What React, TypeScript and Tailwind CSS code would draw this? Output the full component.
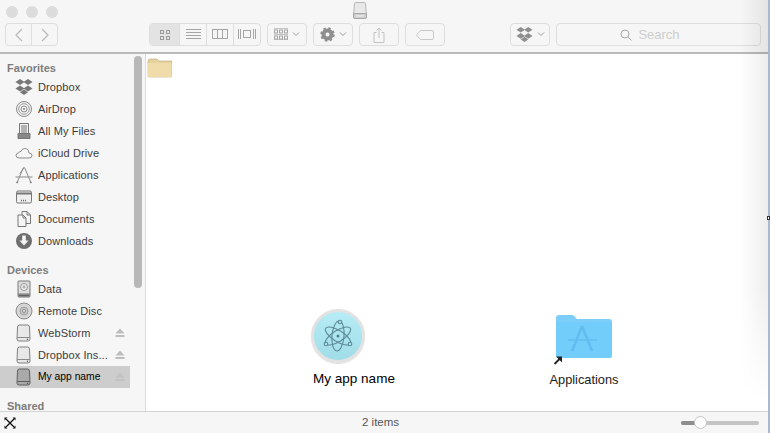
import { ReactNode } from 'react';

const font = { sans: 'font-["Liberation_Sans",Arial,sans-serif]' };

function Ico({ children, w = 20, h = 20 }: { children: ReactNode; w?: number; h?: number }) {
  return (
    <svg width={w} height={h} viewBox={`0 0 ${w} ${h}`} fill="none" stroke="#9a9a9a" strokeWidth="1">
      {children}
    </svg>
  );
}

const DropboxGlyph = ({ fill = '#777' }: { fill?: string }) => (
  <g fill={fill} stroke="none">
    <path d="M5 1 L9.500 4 L5 7 L0.500 4Z" />
    <path d="M13 1 L17.500 4 L13 7 L8.500 4Z" />
    <path d="M5 7.500 L9.500 10.500 L5 13.500 L0.500 10.500Z" />
    <path d="M13 7.500 L17.500 10.500 L13 13.500 L8.500 10.500Z" />
    <path d="M9 11.500 L13 14.200 L9 17 L5 14.200Z" />
  </g>
);

const Drive = ({ dark = false }: { dark?: boolean }) => (
  <Ico w={18} h={18}>
    <path
      d="M2.500 3 Q2.500 1 4.500 1 H12.500 Q14.500 1 14.500 3 L15 15 Q15 17 13 17 H4 Q2 17 2 15Z"
      fill={dark ? '#a9a9a9' : '#e8e8e8'}
      stroke={dark ? '#5f5f5f' : '#808080'}
    />
    <path d="M2.200 13.500 H14.800" stroke={dark ? '#5f5f5f' : '#8a8a8a'} />
    <circle cx="12.500" cy="15.200" r="0.700" fill="#555" stroke="none" />
  </Ico>
);

const sideIcons: Record<string, ReactNode> = {
  Dropbox: (
    <Ico w={18} h={18}>
      <DropboxGlyph />
    </Ico>
  ),
  AirDrop: (
    <Ico w={18} h={18}>
      <circle cx="9" cy="9" r="7.500" stroke="#8a8a8a" />
      <circle cx="9" cy="9" r="5.300" stroke="#9a9a9a" />
      <circle cx="9" cy="9" r="3" stroke="#8a8a8a" />
      <circle cx="9" cy="9" r="1" fill="#777" stroke="none" />
    </Ico>
  ),
  'All My Files': (
    <Ico w={18} h={18}>
      <path d="M4.500 1.500 H13.500 V12 H4.500Z" fill="#f2f2f2" stroke="#777" />
      <path d="M6 4 H12 M6 6 H12 M6 8 H12 M6 10 H12" stroke="#777" />
      <path d="M3 11.500 H15 V16.500 H3Z" fill="#888" stroke="#777" />
    </Ico>
  ),
  'iCloud Drive': (
    <Ico w={18} h={18}>
      <path
        d="M4.500 14 H14 Q17 14 17 11.500 Q17 9.200 14 9 Q13.500 4.500 9.800 4.500 Q7 4.500 6 7.500 Q4.500 7 3.800 8.800 Q1 9.300 1 11.500 Q1 14 4.500 14Z"
        stroke="#8a8a8a"
      />
    </Ico>
  ),
  Applications: (
    <Ico w={18} h={18}>
      <path d="M9.500 1.500 L15.500 15.500 M8.500 1.500 L2.500 15.500 M0.500 11 H17.500 M5 7.500 L9 1.500" stroke="#8a8a8a" />
      <path d="M3 15.500 L1.500 17 M15 15.500 L16.500 17" stroke="#777" strokeWidth="1.500" />
    </Ico>
  ),
  Desktop: (
    <Ico w={18} h={18}>
      <rect x="1.500" y="3" width="15" height="12" rx="1.500" fill="#f0f0f0" stroke="#777" />
      <path d="M2 5.500 H16" stroke="#777" strokeWidth="2" />
      <path d="M6 12.500 H12" stroke="#666" strokeDasharray="1 1" strokeWidth="1.500" />
    </Ico>
  ),
  Documents: (
    <Ico w={18} h={18}>
      <path d="M7 1.500 H12 L15.500 5 V13.500 H7Z" fill="#f5f5f5" stroke="#777" />
      <path d="M12 1.500 V5 H15.500" stroke="#777" />
      <path d="M3 5 H8 L11 8 V16.500 H3Z" fill="#f5f5f5" stroke="#777" />
      <path d="M8 5 V8 H11" stroke="#777" />
    </Ico>
  ),
  Downloads: (
    <Ico w={18} h={18}>
      <circle cx="9" cy="9" r="8" fill="#6f6f6f" stroke="none" />
      <path d="M7.200 3.500 H10.800 V8.500 H13.500 L9 13.500 L4.500 8.500 H7.200Z" fill="#f5f5f5" stroke="none" />
    </Ico>
  ),
  Data: (
    <Ico w={18} h={18}>
      <rect x="3" y="1" width="12" height="16" rx="1" fill="#dedede" stroke="#777" />
      <circle cx="9" cy="7" r="3.500" stroke="#999" fill="#eee" />
      <circle cx="9" cy="7" r="1" stroke="#999" />
      <path d="M3 14 H15" stroke="#777" />
      <path d="M3.500 15.500 H14.500" stroke="#666" strokeWidth="2" />
    </Ico>
  ),
  'Remote Disc': (
    <Ico w={18} h={18}>
      <circle cx="9" cy="9" r="8" fill="#d6d6d6" stroke="#8a8a8a" />
      <circle cx="9" cy="9" r="4" fill="#c6c6c6" stroke="#a0a0a0" />
      <circle cx="9" cy="9" r="1.500" fill="#eee" stroke="#8a8a8a" />
    </Ico>
  ),
  WebStorm: <Drive />,
  'Dropbox Ins...': <Drive />,
  'My app name': <Drive dark />,
};

function Eject({ color = '#bdbdbd' }: { color?: string }) {
  return (
    <svg width="10" height="10" viewBox="0 0 10 10" className="mr-[5px]">
      <path d="M5 0.500 L9.500 5.500 H0.500Z" fill={color} />
      <rect x="0.500" y="7" width="9" height="2" fill={color} />
    </svg>
  );
}

function Row({ name, eject, selected }: { name: string; eject?: boolean; selected?: boolean }) {
  return (
    <div
      className={`flex h-[22px] w-[130px] shrink-0 items-center pl-[15px] ${selected ? 'bg-[#cdcdcd]' : ''}`}
    >
      <div className="flex w-[23px] shrink-0">{sideIcons[name]}</div>
      <span className={`flex-1 truncate ${selected ? 'text-[10.300px] text-black' : 'text-[11px] tracking-[0.1px] text-[#3c3c3c]'}`}>
        {name}
      </span>
      {eject && <Eject color={selected ? '#c2c2c2' : '#bdbdbd'} />}
    </div>
  );
}

function Heading({ children, className = '' }: { children: ReactNode; className?: string }) {
  return (
    <div className={`flex shrink-0 items-center pl-[7px] text-[11px] font-bold leading-none text-[#7d7d7d] ${className}`}>
      {children}
    </div>
  );
}

function Btn({ w, children, className = '' }: { w: string; children?: ReactNode; className?: string }) {
  return (
    <div
      className={`flex h-[23px] shrink-0 items-center justify-center gap-[4px] rounded-[4px] border border-[#dedede] bg-[#f6f6f6] ${w} ${className}`}
    >
      {children}
    </div>
  );
}

const Chevron = () => (
  <svg width="8" height="5" viewBox="0 0 8 5" fill="none" stroke="#9a9a9a">
    <path d="M1 0.500 L4 3.500 L7 0.500" />
  </svg>
);

function Toolbar() {
  return (
    <div className="relative h-[54px] shrink-0 border-b-2 border-[#b9b9b9] bg-[#f6f6f6]">
      <div className="flex h-[23px] items-center gap-[8px] pl-[6px] pt-[1px]">
        <div className="h-[12px] w-[12px] rounded-full bg-[#dcdcdc]" />
        <div className="h-[12px] w-[12px] rounded-full bg-[#dcdcdc]" />
        <div className="h-[12px] w-[12px] rounded-full bg-[#dcdcdc]" />
      </div>
      <div className="absolute left-[352px] top-[2px]">
        <svg width="16" height="17" viewBox="0 0 16 17" fill="none">
          <path d="M2.500 1.500 Q2.500 0.500 3.500 0.500 H12.500 Q13.500 0.500 13.500 1.500 L14.500 15 Q14.500 16.500 13 16.500 H3 Q1.500 16.500 1.500 15Z" fill="#e9e9e9" stroke="#b5b5b5" />
          <path d="M1.500 11.500 H14.500 V15 Q14.500 16.500 13 16.500 H3 Q1.500 16.500 1.500 15Z" fill="#cfcfcf" stroke="#a8a8a8" />
          <path d="M4 14 H12" stroke="#f2f2f2" />
        </svg>
      </div>
      <div className="flex items-center pl-[5px]">
        <div className="flex">
          <Btn w="w-[27px]" className="rounded-r-none">
            <svg width="10" height="14" viewBox="0 0 10 14" fill="none" stroke="#b8b8b8" strokeWidth="1.200">
              <path d="M8 1 L2 7 L8 13" />
            </svg>
          </Btn>
          <Btn w="w-[27px]" className="-ml-px rounded-l-none">
            <svg width="10" height="14" viewBox="0 0 10 14" fill="none" stroke="#b8b8b8" strokeWidth="1.200">
              <path d="M2 1 L8 7 L2 13" />
            </svg>
          </Btn>
        </div>
        <div className="ml-[91px] flex h-[23px] w-[112px] shrink-0 overflow-hidden rounded-[4px] border border-[#dedede]">
          <div className="flex w-[29px] items-center justify-center bg-[#e3e3e3]">
            <svg width="10" height="10" viewBox="0 0 10 10" fill="none" stroke="#9b9b9b">
              <rect x="0.500" y="0.500" width="3" height="3" />
              <rect x="6.500" y="0.500" width="3" height="3" />
              <rect x="0.500" y="6.500" width="3" height="3" />
              <rect x="6.500" y="6.500" width="3" height="3" />
            </svg>
          </div>
          <div className="flex w-[27px] items-center justify-center border-l border-[#dedede]">
            <svg width="15" height="11" viewBox="0 0 15 11" fill="none" stroke="#a5a5a5">
              <path d="M0 0.500 H15 M0 3.500 H15 M0 6.500 H15 M0 9.500 H15" />
            </svg>
          </div>
          <div className="flex w-[27px] items-center justify-center border-l border-[#dedede]">
            <svg width="16" height="11" viewBox="0 0 16 11" fill="none" stroke="#a5a5a5">
              <rect x="0.500" y="0.500" width="15" height="9" />
              <path d="M5.500 0.500 V9.500 M10.500 0.500 V9.500" />
            </svg>
          </div>
          <div className="flex flex-1 items-center justify-center border-l border-[#dedede]">
            <svg width="18" height="11" viewBox="0 0 18 11" fill="none" stroke="#a5a5a5">
              <rect x="5.500" y="1.500" width="7" height="7" />
              <path d="M0.500 0 V10 M2.500 0 V10 M15.500 0 V10 M17.500 0 V10" />
            </svg>
          </div>
        </div>
        <Btn w="w-[40px]" className="ml-[6px]">
          <svg width="14" height="13" viewBox="0 0 14 13" fill="none" stroke="#a5a5a5">
            <path d="M0 0.500 H14 M0 11.500 H14 M0 6.500 H14" strokeWidth="0.600" />
            <rect x="0.500" y="2" width="3" height="3" />
            <rect x="5.500" y="2" width="3" height="3" />
            <rect x="10.500" y="2" width="3" height="3" />
            <rect x="0.500" y="8" width="3" height="3" />
            <rect x="5.500" y="8" width="3" height="3" />
            <rect x="10.500" y="8" width="3" height="3" />
          </svg>
          <Chevron />
        </Btn>
        <Btn w="w-[40px]" className="ml-[6px]">
          <svg width="15" height="15" viewBox="0 0 15 15" fill="none">
            <circle cx="7.500" cy="7.500" r="4" stroke="#8f8f8f" strokeWidth="4" />
            <circle cx="7.500" cy="7.500" r="6" stroke="#8f8f8f" strokeWidth="2.500" strokeDasharray="2.400 2.310" />
          </svg>
          <Chevron />
        </Btn>
        <Btn w="w-[40px]" className="ml-[6px]">
          <svg width="12" height="16" viewBox="0 0 12 16" fill="none" stroke="#c2c2c2">
            <path d="M3.500 5.500 H1 V15.500 H11 V5.500 H8.500 M6 11 V1 M3.500 3.500 L6 1 L8.500 3.500" />
          </svg>
        </Btn>
        <Btn w="w-[40px]" className="ml-[6px]">
          <svg width="18" height="10" viewBox="0 0 18 10" fill="none" stroke="#c9c9c9">
            <path d="M4.500 0.500 H16 Q17.500 0.500 17.500 2 V8 Q17.500 9.500 16 9.500 H4.500 L0.500 5Z" />
          </svg>
        </Btn>
        <Btn w="w-[40px]" className="ml-[65px]">
          <svg width="17" height="17" viewBox="0 0 18 18">
            <DropboxGlyph fill="#8f8f8f" />
          </svg>
          <Chevron />
        </Btn>
        <div className="ml-[6px] flex h-[23px] w-[205px] shrink-0 items-center justify-center gap-[6px] rounded-[4px] border border-[#dedede] pr-[17px]">
          <svg width="12" height="12" viewBox="0 0 12 12" fill="none" stroke="#a8a8a8">
            <circle cx="5" cy="5" r="4" />
            <path d="M8 8 L11.500 11.500" />
          </svg>
          <span className="text-[13px] font-medium text-[#cdcdcd]">Search</span>
        </div>
      </div>
    </div>
  );
}

function Sidebar() {
  return (
    <div className="relative flex w-[146px] shrink-0 flex-col overflow-hidden border-r border-[#dcdcdc] bg-[#f6f6f6] pt-[3px]">
      <Heading className="h-[22px]">Favorites</Heading>
      <div className="mt-[-3px]" />
      {['Dropbox', 'AirDrop', 'All My Files', 'iCloud Drive', 'Applications', 'Desktop', 'Documents', 'Downloads'].map(
        (n) => (
          <Row key={n} name={n} />
        ),
      )}
      <Heading className="mt-[7px] h-[22px]">Devices</Heading>
      <div className="mt-[-3px]" />
      <Row name="Data" />
      <Row name="Remote Disc" />
      <Row name="WebStorm" eject />
      <Row name="Dropbox Ins..." eject />
      <Row name="My app name" eject selected />
      <Heading className="mt-[13px] h-[10px]">Shared</Heading>
      {/* scroller */}
      <div className="absolute left-[134px] top-[2px] h-[232px] w-[8px] rounded-full bg-[#b8b8b8]" />
    </div>
  );
}

function ElectronIcon() {
  return (
    <div className="flex h-[54px] w-[54px] items-center justify-center rounded-full border-[3px] border-[#e2e2e2] bg-gradient-to-b from-[#b6ecf5] to-[#a0dde8] shadow-[0_1px_1px_rgba(0,0,0,0.15)]">
      <svg width="36" height="36" viewBox="0 0 36 36" fill="none" stroke="#5d8a95" strokeWidth="1.100">
        <ellipse cx="18" cy="18" rx="14.500" ry="5.500" transform="rotate(32 18 18)" />
        <ellipse cx="18" cy="18" rx="14.500" ry="5.500" transform="rotate(-32 18 18)" />
        <ellipse cx="18" cy="18" rx="15" ry="6" transform="rotate(95 18 18)" />
        <circle cx="18" cy="18" r="1.500" fill="#4f7d88" stroke="none" />
        <circle cx="20" cy="4" r="1.800" fill="#a8e2ec" />
        <circle cx="30" cy="26" r="1.800" fill="#a8e2ec" />
        <circle cx="6" cy="26" r="1.800" fill="#a8e2ec" />
      </svg>
    </div>
  );
}

function AppsFolder() {
  return (
    <div className="relative">
      <svg width="58" height="46" viewBox="0 0 58 46">
        <path d="M1 4 Q1 1 4 1 H17 Q19 1 21 4 L22 5 H54 Q57 5 57 8 V41 Q57 44 54 44 H4 Q1 44 1 41Z" fill="#7ccdf8" />
        <path d="M1 8 H57 V41 Q57 44 54 44 H4 Q1 44 1 41Z" fill="#73cdfb" />
        <g stroke="#62bcef" strokeWidth="2.500" fill="none">
          <path d="M27 12 L17 37 M27 12 L37 37" />
          <path d="M13 26 H42" strokeWidth="1.500" />
        </g>
      </svg>
      <svg width="10" height="10" viewBox="0 0 10 10" className="absolute -bottom-[5px] -left-[2px]">
        <path d="M1.500 9 L7 3.500" stroke="#222" strokeWidth="1.800" />
        <path d="M3 1.500 H9 V7.500Z" fill="#222" />
      </svg>
    </div>
  );
}

function Content() {
  return (
    <div className="relative flex-1 overflow-hidden bg-white">
      <svg width="26" height="20" viewBox="0 0 26 20" className="absolute left-[1px] top-[4px]">
        <path d="M1 3 Q1 1 3 1 H9 Q11 1 12 3 H24.500 V18 Q24.500 19 23.500 19 H2 Q1 19 1 18Z" fill="#e6d29c" stroke="#b9a67c" strokeWidth="0.600" />
        <path d="M1 5 H24.500 V18 Q24.500 19 23.500 19 H2 Q1 19 1 18Z" fill="#efdcaa" />
      </svg>
      <div className="absolute left-[163px] top-[255px] flex w-[58px] justify-center">
        <ElectronIcon />
      </div>
      <div className="absolute left-[158px] top-[315px] w-[100px] text-center text-[13.500px] text-black">My app name</div>
      <div className="absolute left-[409px] top-[260px]">
        <AppsFolder />
      </div>
      <div className="absolute left-[388px] top-[316px] w-[100px] text-center text-[12.800px] text-[#1c1c1c]">Applications</div>
    </div>
  );
}

export default function App() {
  return (
    <div className={`relative flex h-[433px] w-[770px] flex-col overflow-hidden bg-white ${font.sans}`}>
      <Toolbar />
      <div className="flex min-h-0 flex-1">
        <Sidebar />
        <Content />
      </div>
      <div className="relative flex h-[22px] shrink-0 items-center border-t border-[#d4d4d4] bg-[#f6f6f6]">
        <svg width="12" height="12" viewBox="0 0 12 12" className="ml-[4px]" stroke="#111" strokeWidth="1.300">
          <path d="M2 2 L10 10 M10 2 L2 10" />
          <path d="M0.500 0.500 H3.500 L0.500 3.500Z M11.500 11.500 H8.500 L11.500 8.500Z M11.500 0.500 H8.500 L11.500 3.500Z M0.500 11.500 H3.500 L0.500 8.500Z" fill="#111" stroke="none" />
        </svg>
        <span className="absolute left-[362px] text-[11.500px] text-[#555]">2 items</span>
        <div className="absolute left-[681px] h-[4px] w-[78px] rounded-full bg-[#c4c4c4]">
          <div className="h-full w-[16px] rounded-l-full bg-[#8e8e8e]" />
          <div className="absolute left-[13px] top-[-5px] h-[13px] w-[13px] rounded-full border border-[#c4c4c4] bg-white" />
        </div>
      </div>
      {/* window shadow on the right edge */}
      <div className="pointer-events-none absolute right-[2px] top-0 h-[400px] w-[28px] bg-gradient-to-r from-transparent to-black/[0.07] [mask-image:linear-gradient(to_bottom,black_72%,transparent)]" />
      <div className="absolute right-0 top-0 h-full w-[2px] bg-[#a9b8cc]" />
      <div className="absolute right-0 top-[216px] h-[4px] w-[3px] border border-[#333] bg-white" />
    </div>
  );
}
